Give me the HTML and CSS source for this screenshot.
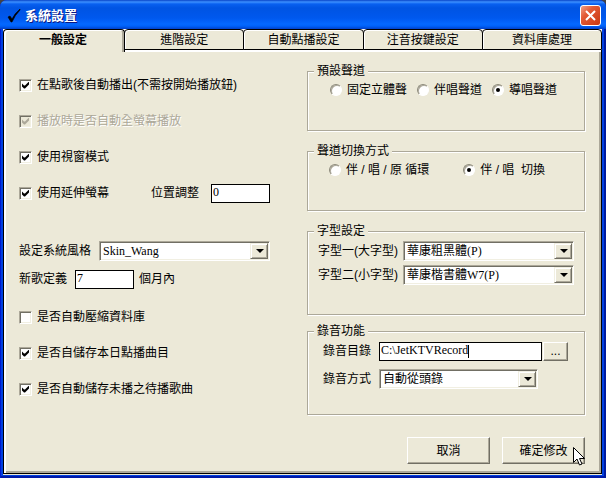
FILE: index.html
```html
<!DOCTYPE html>
<html lang="zh-Hant">
<head>
    <meta charset="UTF-8">
    <meta name="viewport" content="width=device-width, initial-scale=1.0">
    <title>系統設置</title>
    <link rel="stylesheet" href="styles.css">
</head>
<body>
    <div class="window">
        <div class="title-bar">
            <svg class="title-icon" width="14" height="14" viewBox="0 0 14 14">
                <path d="M1 8 L3 7 L5 10 Q8 4 13 0 L13 1 Q8 6 5 13 L4 13 Z" fill="#000" stroke="#000" stroke-width="0.6"/>
            </svg>
            <h1 class="title">系統設置</h1>
            <button class="close" type="button" aria-label="關閉">
                <svg width="17" height="17" viewBox="0 0 17 17">
                    <path d="M4 4 L13 13 M13 4 L4 13" stroke="#fff" stroke-width="2"/>
                </svg>
            </button>
        </div>

        <div class="tabs" role="tablist">
            <button class="tab active" type="button" role="tab" aria-selected="true">一般設定</button>
            <button class="tab" type="button" role="tab">進階設定</button>
            <button class="tab" type="button" role="tab">自動點播設定</button>
            <button class="tab" type="button" role="tab">注音按鍵設定</button>
            <button class="tab" type="button" role="tab">資料庫處理</button>
        </div>

        <form class="panel">
            <div class="left-column">
                <div class="row">
                    <label class="option"><input class="check" type="checkbox" checked>在點歌後自動播出(不需按開始播放鈕)</label>
                </div>
                <div class="row">
                    <label class="option disabled"><input class="check" type="checkbox" checked disabled>播放時是否自動全螢幕播放</label>
                </div>
                <div class="row">
                    <label class="option"><input class="check" type="checkbox" checked>使用視窗模式</label>
                </div>
                <div class="row">
                    <label class="option"><input class="check" type="checkbox" checked>使用延伸螢幕</label>
                    <label class="offset-label" for="offset">位置調整</label>
                    <input id="offset" class="text-box short" type="text" value="0">
                </div>

                <div class="style-rows">
                    <div class="row">
                        <label class="style-label" for="skin">設定系統風格</label>
                        <span class="select-box skin">
                            <select id="skin"><option>Skin_Wang</option></select>
                        </span>
                    </div>
                    <div class="row">
                        <label class="song-label" for="months">新歌定義</label>
                        <input id="months" class="text-box short" type="text" value="7">
                        <span class="unit">個月內</span>
                    </div>
                </div>

                <div class="row">
                    <label class="option"><input class="check" type="checkbox">是否自動壓縮資料庫</label>
                </div>
                <div class="row">
                    <label class="option"><input class="check" type="checkbox" checked>是否自儲存本日點播曲目</label>
                </div>
                <div class="row">
                    <label class="option"><input class="check" type="checkbox" checked>是否自動儲存未播之待播歌曲</label>
                </div>
            </div>

            <div class="right-column">
                <fieldset class="group">
                    <legend>預設聲道</legend>
                    <div class="row channel">
                        <label class="option"><input class="radio" type="radio" name="channel">固定立體聲</label>
                        <label class="option"><input class="radio" type="radio" name="channel">伴唱聲道</label>
                        <label class="option"><input class="radio" type="radio" name="channel" checked>導唱聲道</label>
                    </div>
                </fieldset>
                <fieldset class="group">
                    <legend>聲道切換方式</legend>
                    <div class="row switching">
                        <label class="option"><input class="radio" type="radio" name="switch">伴 / 唱 / 原 循環</label>
                        <label class="option"><input class="radio" type="radio" name="switch" checked>伴 / 唱 &nbsp;切換</label>
                    </div>
                </fieldset>
                <fieldset class="group tall fonts">
                    <legend>字型設定</legend>
                    <div class="row">
                        <label class="field-label" for="font-big">字型一(大字型)</label>
                        <span class="select-box font">
                            <select id="font-big"><option>華康粗黑體(P)</option></select>
                        </span>
                    </div>
                    <div class="row">
                        <label class="field-label" for="font-small">字型二(小字型)</label>
                        <span class="select-box font">
                            <select id="font-small"><option>華康楷書體W7(P)</option></select>
                        </span>
                    </div>
                </fieldset>
                <fieldset class="group tall record">
                    <legend>錄音功能</legend>
                    <div class="row">
                        <label class="field-label" for="folder">錄音目錄</label>
                        <span class="text-box folder">
                            <input id="folder" type="text" value="C:\JetKTVRecord">
                            <span class="caret"></span>
                        </span>
                        <button class="button browse" type="button">...</button>
                    </div>
                    <div class="row">
                        <label class="field-label" for="mode">錄音方式</label>
                        <span class="select-box mode">
                            <select id="mode"><option>自動從頭錄</option></select>
                        </span>
                    </div>
                </fieldset>

                <div class="button-container">
                    <button class="button" type="button">取消</button>
                    <button class="button" type="button">確定修改</button>
                    <svg class="pointer" width="12" height="19" viewBox="0 0 12 19">
                        <path d="M0.5 0.5 V15.5 L4 12 L6.5 18 L9 17 L6.5 11.5 H11.5 Z" fill="#fff" stroke="#000"/>
                    </svg>
                </div>
            </div>
        </form>
    </div>
</body>
</html>
```
FILE: styles.css
```css
* {
    box-sizing: border-box;
}
body {
    margin: 0;
    background: #444;
    color: #000;
    font-family: "Liberation Sans", "Noto Sans CJK TC", sans-serif;
    font-size: 12px;
    line-height: 16px;
}
button,
input,
select {
    margin: 0;
    padding: 0;
    color: #000;
    font: inherit;
}
.window {
    display: flex;
    flex-direction: column;
    min-height: 100vh;
    padding: 0 4px 4px 3px;
    border-radius: 7px 7px 0 0;
    background: #0040e0;
    box-shadow: inset 1px 0 #0019cf, inset -2px 0 #001a9e, inset 0 -2px #0019a8;
}
.title-bar {
    display: flex;
    align-items: center;
    height: 29px;
    margin: 0 -4px 0 -3px;
    padding: 2px 5px 0 7px;
    border-radius: 7px 7px 0 0;
    background: linear-gradient(#0844c8 0, #3c90ff 2px, #0860f0 4px, #0054e3 8px, #0058ee 18px, #0468ff 24px, #0062fa 26px, #0040c8 29px);
}
.title {
    flex: 1;
    margin: 0 0 0 4px;
    color: #fff;
    font-size: 13px;
    font-weight: bold;
    text-shadow: 1px 1px #0a1883;
}
.close {
    display: flex;
    align-items: center;
    justify-content: center;
    width: 21px;
    height: 21px;
    border: 1px solid #fff;
    border-radius: 3px;
    background: linear-gradient(135deg, #f0a088, #e35a35 35%, #c83810);
}
.tabs {
    display: flex;
    padding-left: 1px;
    background: #fff;
}
.tab {
    flex: 1;
    height: 21px;
    margin-left: -1px;
    border: 1px solid #000;
    border-radius: 4px 4px 0 0;
    background: #ece9d8;
    box-shadow: inset 1px 1px #fff;
}
.tab.active {
    position: relative;
    height: 23px;
    margin-bottom: -2px;
    padding: 0 2px 2px 0;
    border-bottom: 0;
    box-shadow: inset 2px 1px #fff, inset -2px 0 #aca899;
    font-weight: bold;
}
.panel {
    flex: 1;
    display: grid;
    grid-template-columns: 290px 1fr;
    padding: 13px 17px 5px 13px;
    border: 1px solid #000;
    border-top: 0;
    background: #ece9d8;
    box-shadow: 0 1px #ece9d8, inset 2px 2px #fff, inset -2px -2px #aca899;
}
.left-column {
    display: flex;
    flex-direction: column;
    gap: 16px;
    padding: 12px 0 0 2px;
}
.row {
    display: flex;
    align-items: center;
    height: 20px;
}
.option {
    display: flex;
    align-items: center;
    gap: 5px;
    white-space: nowrap;
}
.disabled {
    color: #aca899;
    text-shadow: 1px 1px #fff;
}
.check {
    appearance: none;
    width: 13px;
    height: 13px;
    border: 1px solid;
    border-color: #aca899 #fff #fff #aca899;
    background: #fff;
    box-shadow: inset 1px 1px #716f64, inset -1px -1px #f1efe2;
}
.check:checked::after {
    content: "";
    display: block;
    width: 7px;
    height: 7px;
    margin: 2px;
    background: #000;
    clip-path: polygon(0 2px, 2px 4px, 3px 4px, 7px 0, 7px 3px, 3px 7px, 2px 7px, 0 5px);
}
.check:disabled {
    background: #ece9d8;
}
.check:disabled::after {
    background: #aca899;
}
.radio {
    appearance: none;
    width: 12px;
    height: 12px;
    border: 1px solid;
    border-color: #8c897a #fff #fff #8c897a;
    border-radius: 50%;
    background: #fff;
    box-shadow: inset 1px 1px #aca899;
}
.radio:checked::after {
    content: "";
    display: block;
    width: 4px;
    height: 4px;
    margin: 3px;
    border-radius: 50%;
    background: #000;
}
.offset-label {
    margin: 0 12px 0 42px;
}
.text-box {
    height: 19px;
    padding: 0 1px 2px;
    border: 1px solid #000;
    background: #fff;
    font-family: "Liberation Serif", "Noto Sans CJK TC", serif;
}
.short {
    width: 59px;
}
.style-rows {
    display: flex;
    flex-direction: column;
    gap: 8px;
    margin: 22px 0 2px;
}
.style-label {
    width: 80px;
}
.song-label {
    width: 56px;
}
.unit {
    margin-left: 5px;
}
.select-box {
    position: relative;
    display: flex;
    height: 20px;
    border: 1px solid;
    border-color: #aca899 #fff #fff #aca899;
    background: #fff;
    box-shadow: inset 1px 1px #716f64, inset -1px -1px #f1efe2;
}
.select-box select {
    appearance: none;
    flex: 1;
    padding-left: 3px;
    border: 0;
    outline: 0;
    background: transparent;
    font-family: "Liberation Serif", "Noto Sans CJK TC", serif;
}
.select-box::before,
.select-box::after {
    content: "";
    position: absolute;
    pointer-events: none;
}
.select-box::before {
    top: 1px;
    right: 1px;
    bottom: 1px;
    width: 16px;
    border: 1px solid;
    border-color: #f1efe2 #716f64 #716f64 #f1efe2;
    background: #ece9d8;
    box-shadow: inset 1px 1px #fff, inset -1px -1px #aca899;
}
.select-box::after {
    top: 7px;
    right: 5px;
    border: 4px solid transparent;
    border-top-color: #000;
    border-bottom: 0;
}
.skin {
    width: 171px;
}
.right-column {
    display: flex;
    flex-direction: column;
}
.group {
    min-height: 68px;
    margin: 0 0 12px;
    padding: 0 10px;
    border: 1px solid #aca899;
    box-shadow: inset 1px 1px #fff, 1px 1px #fff;
}
.group legend {
    margin-left: -4px;
    padding: 0 3px;
    background: #ece9d8;
}
.tall {
    min-height: 92px;
    margin-bottom: 8px;
}
.channel {
    gap: 10px;
    padding: 2px 0 0 12px;
}
.switching {
    gap: 34px;
    padding: 2px 0 0 11px;
}
.fonts {
    padding-top: 2px;
}
.fonts .row + .row {
    margin-top: 4px;
}
.fonts .field-label {
    width: 85px;
}
.font {
    width: 171px;
}
.record {
    padding: 2px 10px 0 15px;
}
.record legend {
    margin-left: -9px;
}
.record .row + .row {
    margin-top: 8px;
}
.record .field-label {
    width: 56px;
}
.folder {
    display: flex;
    width: 163px;
    position: relative;
}
.folder input {
    flex: 1;
    min-width: 0;
    border: 0;
    outline: 0;
    background: transparent;
}
.caret {
    position: absolute;
    top: 2px;
    left: 88px;
    width: 1px;
    height: 13px;
    background: #000;
}
.mode {
    width: 159px;
}
.button {
    width: 83px;
    height: 27px;
    border: 1px solid;
    border-color: #fff #716f64 #716f64 #fff;
    background: #ece9d8;
    box-shadow: inset -1px -1px #aca899;
}
.browse {
    width: 25px;
    height: 19px;
    margin-left: 1px;
}
.button-container {
    position: relative;
    display: flex;
    justify-content: flex-end;
    gap: 12px;
    margin-top: 14px;
}
.pointer {
    position: absolute;
    top: 10px;
    right: 0;
}
```
